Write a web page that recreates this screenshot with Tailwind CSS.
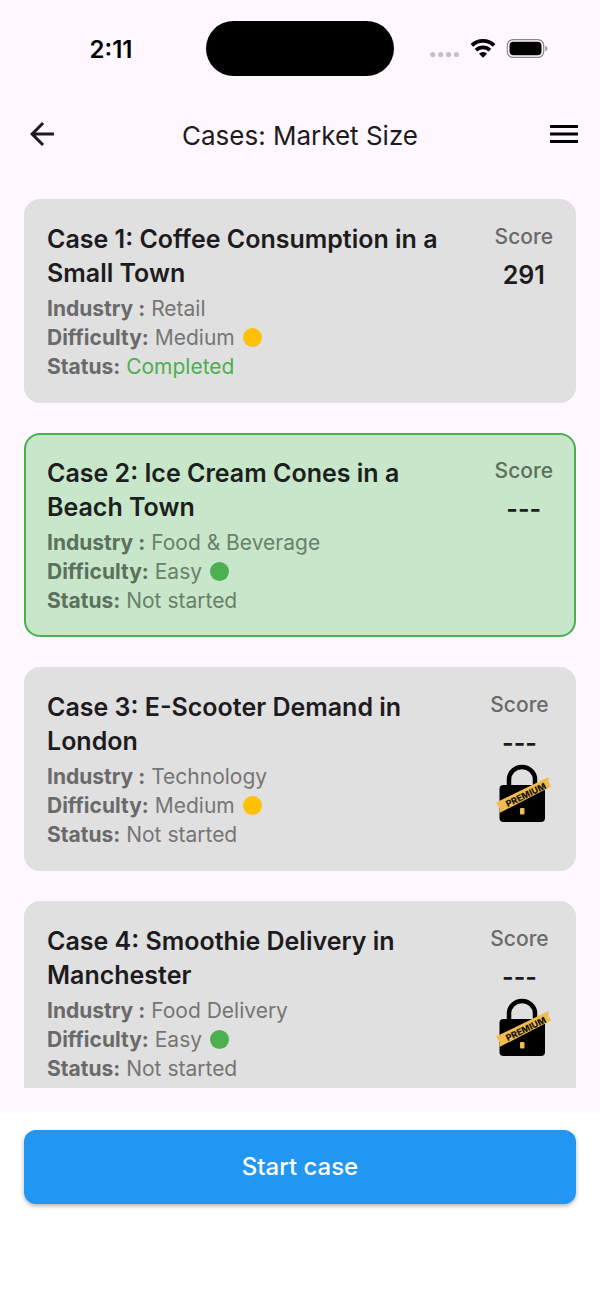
<!DOCTYPE html>
<html lang="en">
<head>
<meta charset="utf-8">
<meta name="viewport" content="width=device-width, initial-scale=1">
<title>Cases: Market Size</title>
<script src="https://cdn.jsdelivr.net/npm/@tailwindcss/browser@4"></script>
</head>
<body class="flex h-screen flex-col bg-[#fef7ff] font-['Inter','Liberation_Sans',sans-serif] text-[#1d1b20]">
<svg class="hidden" aria-hidden="true">
  <symbol id="lock" viewBox="0 0 56 60">
    <path d="M13 24V16.500a13 12.500 0 0 1 26 0V24" fill="none" stroke="#000" stroke-width="4.500"/>
    <rect x="3.500" y="22" width="45.500" height="37" rx="4" fill="#000"/>
    <rect x="24" y="45" width="4.500" height="6.500" rx="1" fill="#f0bc4f"/>
    <path d="M0 39.500 52.500 14 52.500 18.500 55 23.500 3.500 50 3.500 45Z" fill="#f0bc4f"/>
    <text x="30" y="35" transform="rotate(-26 30 32)" text-anchor="middle" font-size="9" font-weight="800" fill="#1a1204">PREMIUM</text>
  </symbol>
</svg>

<div class="grid h-24 shrink-0 grid-cols-[1fr_188px_1fr] items-center">
  <time class="justify-self-center pt-1 pl-4 text-2xl font-semibold text-black">2:11</time>
  <div class="h-[55px] rounded-full bg-black"></div>
  <div class="flex items-center pl-9">
    <svg class="h-6 w-[118px]" viewBox="0 0 118 24" role="img" aria-label="Wi-Fi connected, battery full">
      <g fill="#c5bfc7"><circle cx="2.800" cy="18.500" r="2.600"/><circle cx="10.700" cy="18.500" r="2.600"/><circle cx="18.600" cy="18.500" r="2.600"/><circle cx="26.500" cy="18.500" r="2.600"/></g>
      <g fill="none" stroke="#000" stroke-width="3.800"><path d="M41.900 9.400a16 16 0 0 1 22.200 0"/><path d="M46 14.200a10 10 0 0 1 14 0"/></g>
      <path d="M49 17.800a5.500 5.500 0 0 1 8 0L53 21.700Z"/>
      <rect x="77.300" y="3.600" width="36.400" height="17.800" rx="5.800" fill="none" stroke="#8b868d" stroke-width="1.200"/>
      <rect x="79.500" y="5.800" width="32" height="13.400" rx="4"/>
      <path d="M115.400 9.700v5.600a3 3 0 0 0 0-5.600" fill="#8b868d"/>
    </svg>
  </div>
</div>

<header class="grid h-[76px] shrink-0 grid-cols-[60px_1fr_60px] items-center px-3">
  <button type="button" aria-label="Back" class="flex size-[60px] items-center justify-center">
    <svg class="size-9" viewBox="0 0 24 24"><path d="M20 11H7.830l5.590-5.590L12 4l-8 8 8 8 1.410-1.410L7.830 13H20z" fill="#1d1b20"/></svg>
  </button>
  <h1 class="pt-1 text-center text-[26px] leading-9 font-normal">Cases: Market Size</h1>
  <button type="button" aria-label="Menu" class="flex size-[60px] items-center justify-end pr-[10px]">
    <svg class="h-5 w-[28px]" viewBox="0 0 28 20" fill="#000"><path d="M0 1h28v3H0zM0 8.500h28v3H0zM0 16h28v3H0z"/></svg>
  </button>
</header>

<main class="mx-6 mt-[27px] mb-6 flex min-h-0 flex-1 flex-col gap-[30px] overflow-y-auto [scrollbar-width:none]">
  <article class="flex shrink-0 justify-between gap-10 rounded-2xl bg-[#e0e0e0] px-[23px] pt-[23px] pb-[22px]">
    <div class="min-w-0 flex-1 text-[21px] leading-[29px] text-[#757575]">
      <h2 class="mb-1 text-[25px] leading-[34px] font-semibold text-[#1d1b20]">Case 1: Coffee Consumption in a Small Town</h2>
      <p><b class="font-bold text-[#6a6a6a]">Industry :</b> Retail</p>
      <p class="flex items-center"><span><b class="font-bold text-[#6a6a6a]">Difficulty:</b> Medium</span><span class="ml-2 size-[19px] rounded-full bg-[#ffc107]"></span></p>
      <p><b class="font-bold text-[#6a6a6a]">Status:</b> <span class="text-[#4caf50]">Completed</span></p>
    </div>
    <div class="flex flex-col items-center text-[21px] leading-[30px] font-medium text-[#6a6a6a]">
      <span>Score</span>
      <strong class="mt-2 text-[25px] leading-[30px] font-semibold text-[#1d1b20]">291</strong>
    </div>
  </article>

  <article class="flex shrink-0 justify-between gap-10 rounded-2xl border-2 border-[#4caf50] bg-[#c8e6c9] px-[21px] pt-[21px] pb-5">
    <div class="min-w-0 flex-1 text-[21px] leading-[29px] text-[#69806a]">
      <h2 class="mb-1 text-[25px] leading-[34px] font-semibold text-[#1a211c]">Case 2: Ice Cream Cones in a Beach Town</h2>
      <p><b class="font-bold text-[#5b705d]">Industry :</b> Food &amp; Beverage</p>
      <p class="flex items-center"><span><b class="font-bold text-[#5b705d]">Difficulty:</b> Easy</span><span class="ml-2 size-[19px] rounded-full bg-[#4caf50]"></span></p>
      <p><b class="font-bold text-[#5b705d]">Status:</b> Not started</p>
    </div>
    <div class="flex flex-col items-center text-[21px] leading-[30px] font-medium text-[#5b705d]">
      <span>Score</span>
      <strong class="mt-2 text-[25px] leading-[30px] font-semibold text-[#1a211c]">---</strong>
    </div>
  </article>

  <article class="flex shrink-0 justify-between gap-10 rounded-2xl bg-[#e0e0e0] px-[23px] pt-[23px] pb-[22px]">
    <div class="min-w-0 flex-1 text-[21px] leading-[29px] text-[#757575]">
      <h2 class="mb-1 text-[25px] leading-[34px] font-semibold text-[#1d1b20]">Case 3: E-Scooter Demand in London</h2>
      <p><b class="font-bold text-[#6a6a6a]">Industry :</b> Technology</p>
      <p class="flex items-center"><span><b class="font-bold text-[#6a6a6a]">Difficulty:</b> Medium</span><span class="ml-2 size-[19px] rounded-full bg-[#ffc107]"></span></p>
      <p><b class="font-bold text-[#6a6a6a]">Status:</b> Not started</p>
    </div>
    <div class="flex w-[67px] flex-col items-center text-[21px] leading-[30px] font-medium text-[#6a6a6a]">
      <span>Score</span>
      <strong class="mt-2 text-[25px] leading-[30px] font-semibold text-[#1d1b20]">---</strong>
      <svg class="mt-[5px] ml-2 h-[60px] w-14" role="img" aria-label="Premium, locked"><use href="#lock"/></svg>
    </div>
  </article>

  <article class="flex shrink-0 justify-between gap-10 rounded-2xl bg-[#e0e0e0] px-[23px] pt-[23px] pb-[22px]">
    <div class="min-w-0 flex-1 text-[21px] leading-[29px] text-[#757575]">
      <h2 class="mb-1 text-[25px] leading-[34px] font-semibold text-[#1d1b20]">Case 4: Smoothie Delivery in Manchester</h2>
      <p><b class="font-bold text-[#6a6a6a]">Industry :</b> Food Delivery</p>
      <p class="flex items-center"><span><b class="font-bold text-[#6a6a6a]">Difficulty:</b> Easy</span><span class="ml-2 size-[19px] rounded-full bg-[#4caf50]"></span></p>
      <p><b class="font-bold text-[#6a6a6a]">Status:</b> Not started</p>
    </div>
    <div class="flex w-[67px] flex-col items-center text-[21px] leading-[30px] font-medium text-[#6a6a6a]">
      <span>Score</span>
      <strong class="mt-2 text-[25px] leading-[30px] font-semibold text-[#1d1b20]">---</strong>
      <svg class="mt-[5px] ml-2 h-[60px] w-14" role="img" aria-label="Premium, locked"><use href="#lock"/></svg>
    </div>
  </article>
</main>

<footer class="shrink-0 bg-white px-6 pt-[18px] pb-[95px]">
  <button type="button" class="block h-[74px] w-full rounded-xl bg-[#2196f3] text-2xl font-medium text-white shadow-[0_2px_4px_rgba(0,0,0,0.3)]">Start case</button>
</footer>
</body>
</html>
